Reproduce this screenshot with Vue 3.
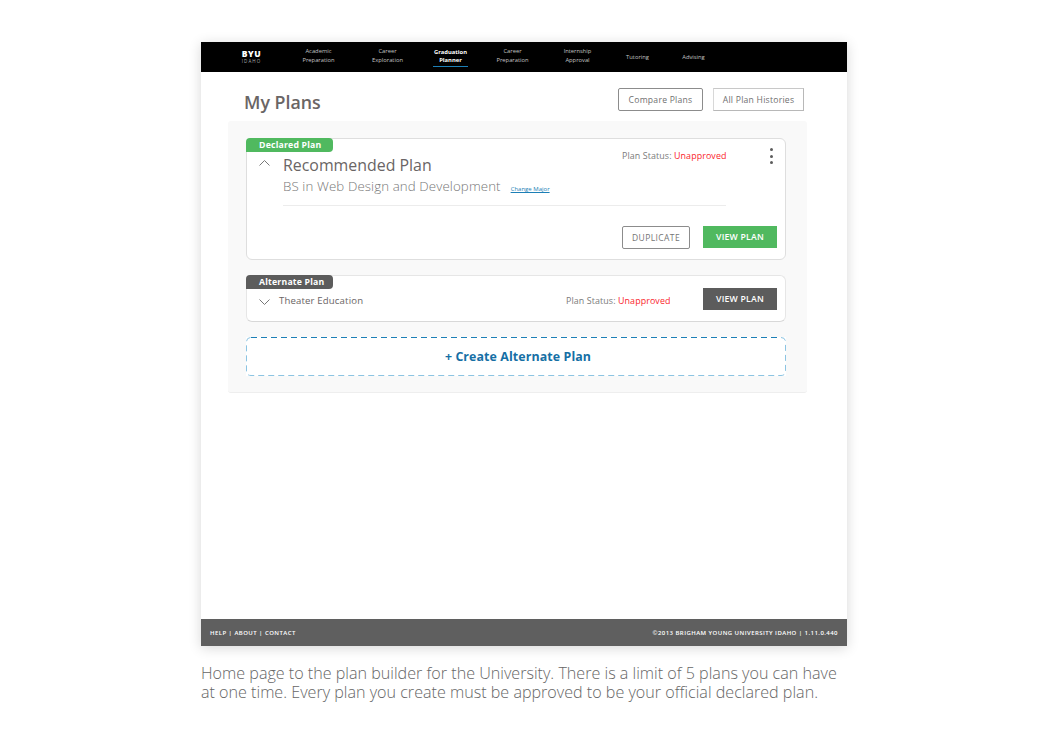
<template>
  <div class="page">
    <div class="frame">
      <nav class="nav">
        <div class="logo"><b>BYU</b><span>IDAHO</span></div>
        <a v-for="item in navItems" :key="item.label + item.second" class="nav-item" :class="{ active: item.active, single: !item.second }">
          <span class="nav-text">{{ item.label }}<br v-if="item.second" />{{ item.second }}</span>
        </a>
      </nav>

      <main class="main">
        <header class="head">
          <h1>My Plans</h1>
          <div class="head-actions">
            <button class="ghost compare">Compare Plans</button>
            <button class="ghost histories">All Plan Histories</button>
          </div>
        </header>

        <section class="panel">
          <article class="card declared">
            <div class="tag green">Declared Plan</div>
            <div class="declared-top">
              <svg class="chev up" width="11" height="6" viewBox="0 0 11 6"><path d="M0.5 5.5 L5.5 0.5 L10.5 5.5" /></svg>
              <div class="declared-info">
                <h2>Recommended Plan</h2>
                <div class="major">
                  <span>BS in Web Design and Development</span>
                  <a>Change Major</a>
                </div>
              </div>
              <div class="status top-status">Plan Status: <em>Unapproved</em></div>
              <div class="dots"><i></i><i></i><i></i></div>
            </div>
            <div class="rule"></div>
            <div class="declared-actions">
              <button class="duplicate">DUPLICATE</button>
              <button class="solid view-green">VIEW PLAN</button>
            </div>
          </article>

          <article class="card alternate">
            <div class="tag dark">Alternate Plan</div>
            <div class="alt-row">
              <svg class="chev" width="11" height="6" viewBox="0 0 11 6"><path d="M0.5 0.5 L5.5 5.5 L10.5 0.5" /></svg>
              <span class="alt-name">Theater Education</span>
              <div class="status alt-status">Plan Status: <em>Unapproved</em></div>
              <button class="solid view-dark">VIEW PLAN</button>
            </div>
          </article>

          <div class="create">
            <svg class="create-border" width="540" height="39" viewBox="0 0 540 39">
              <path class="dash-top" d="M5 0.5 H535" />
              <path class="dash-rest" d="M535 0.5 Q539.5 0.5 539.5 5 V34 Q539.5 38.5 535 38.5 H5 Q0.5 38.5 0.5 34 V5 Q0.5 0.5 5 0.5" />
            </svg>
            + Create Alternate Plan
          </div>
        </section>
      </main>

      <footer class="foot">
        <span>HELP | ABOUT | CONTACT</span>
        <span>©2013 BRIGHAM YOUNG UNIVERSITY IDAHO | 1.11.0.440</span>
      </footer>
    </div>

    <p class="caption">Home page to the plan builder for the University. There is a limit of 5 plans you can have at one time. Every plan you create must be approved to be your official declared plan.</p>
  </div>
</template>

<script setup>
const navItems = [
  { label: 'Academic', second: 'Preparation' },
  { label: 'Career', second: 'Exploration' },
  { label: 'Graduation', second: 'Planner', active: true },
  { label: 'Career', second: 'Preparation' },
  { label: 'Internship', second: 'Approval' },
  { label: 'Tutoring' },
  { label: 'Advising' }
]
</script>

<style>
html, body { margin: 0; background: #fff; }
</style>

<style scoped>
.page {
  width: 1048px;
  height: 755px;
  padding: 42px 0 0 201px;
  box-sizing: border-box;
  overflow: hidden;
  font-family: "Open Sans", sans-serif;
  background: #fff;
}
.frame {
  width: 646px;
  height: 604px;
  display: flex;
  flex-direction: column;
  box-shadow: 0 2px 12px rgba(0, 0, 0, 0.16);
  background: #fff;
}
.nav {
  height: 30px;
  flex: none;
  background: #000;
  display: grid;
  grid-template-columns: 60px 74px 64px 62px 62px 68px 52px 60px;
  padding-left: 20.5px;
  color: #c4c4c4;
}
.logo {
  display: flex;
  flex-direction: column;
  align-items: center;
  justify-content: center;
  color: #fff;
  padding-bottom: 1px;
}
.logo b { font-size: 8.5px; font-weight: 800; letter-spacing: 0.5px; line-height: 8px; }
.logo span { font-size: 4.5px; line-height: 6px; letter-spacing: 1.1px; color: #aaa; }
.nav-item {
  display: flex;
  align-items: center;
  justify-content: center;
  text-align: center;
  font-size: 5.8px;
  line-height: 8.5px;
}
.nav-text { display: block; padding-bottom: 3px; }
.nav-item.single .nav-text { padding-bottom: 0; }
.nav-item.active { color: #fff; font-weight: 700; }
.nav-item.active .nav-text {
  padding: 0 1px 1px;
  border-bottom: 1px solid #1c7fb6;
}
.main { flex: 1; padding: 0 40px 0 27px; min-height: 0; }
.head {
  height: 49px;
  display: flex;
  justify-content: space-between;
  align-items: flex-start;
  padding-left: 16px;
}
h1 {
  margin: 17px 0 0;
  font-size: 17.8px;
  line-height: 26px;
  font-weight: 600;
  color: #6a6565;
}
.head-actions { display: flex; gap: 10px; margin: 16px 3px 0 0; }
.ghost {
  height: 23px;
  padding: 0;
  background: #fff;
  font: 400 8.6px "Open Sans", sans-serif;
  letter-spacing: 0.25px;
  color: #6f6f6f;
  box-sizing: border-box;
}
.compare { width: 85px; border: 1px solid #8c8c8c; border-radius: 2px; }
.histories { width: 91px; border: 1px solid #b8b8b8; border-left-color: #d8d8d8; border-top-color: #c8c8c8; }
.panel {
  width: 579px;
  height: 272px;
  box-sizing: border-box;
  padding: 17px 21px 0 18px;
  background: #f9f9f9;
  border-radius: 3px;
  border-bottom: 1px solid #eee;
  display: flex;
  flex-direction: column;
}
.card {
  position: relative;
  background: #fff;
  border: 1px solid #dedede;
  border-radius: 6px;
  box-sizing: border-box;
}
.tag {
  position: absolute;
  left: -1px;
  top: -1px;
  width: 87px;
  height: 14px;
  border-radius: 4px 4px 4px 0;
  box-sizing: border-box;
  padding-left: 13px;
  color: #fff;
  font-size: 8.7px;
  font-weight: 700;
  line-height: 14px;
  letter-spacing: 0.2px;
}
.tag.green { background: #50b95f; }
.tag.dark { background: #5c5c5c; }
.declared { height: 122px; }
.declared-top { display: flex; align-items: flex-start; height: 66px; }
.chev { flex: none; fill: none; stroke: #777; stroke-width: 1; }
.chev.up { margin: 21px 0 0 12px; }
.declared-info { margin-left: 13px; width: 339px; }
h2 {
  margin: 16px 0 0;
  font-size: 15.9px;
  line-height: 20px;
  font-weight: 500;
  color: #6a6565;
}
.major {
  display: flex;
  align-items: baseline;
  gap: 10px;
  margin-top: 2px;
  font-size: 13.3px;
  line-height: 19px;
  font-weight: 300;
  color: #777;
  white-space: nowrap;
  letter-spacing: 0.1px;
}
.major a {
  font-size: 6px;
  font-weight: 400;
  color: #1c7fb6;
  text-decoration: underline;
  letter-spacing: 0;
}
.status {
  font-size: 8.9px;
  color: #7b7b7b;
  white-space: nowrap;
  letter-spacing: 0.1px;
}
.status em { font-style: normal; color: #fa1e2c; }
.top-status { margin: 10px 0 0 0; width: 105px; line-height: 14px; }
.dots { display: flex; flex-direction: column; gap: 3.5px; margin: 9px 0 0 43px; }
.dots i { display: block; width: 3px; height: 3px; border-radius: 50%; background: #5c5c5c; }
.rule { height: 1px; margin: 0 59px 0 36px; background: #ececec; }
.declared-actions { display: flex; justify-content: flex-end; gap: 13px; padding: 20px 8px 0 0; }
.duplicate {
  width: 68px;
  height: 23px;
  padding: 0;
  background: #fff;
  border: 1px solid #8c8c8c;
  border-radius: 2px;
  font: 400 8.5px "Open Sans", sans-serif;
  letter-spacing: 0.4px;
  color: #757575;
}
.solid {
  width: 74px;
  height: 22px;
  padding: 0;
  border: 0;
  color: #fff;
  font: 600 8.7px "Open Sans", sans-serif;
  letter-spacing: 0.2px;
}
.view-green { background: #50b95f; }
.view-dark { background: #5c5c5c; }
.alternate {
  height: 47px;
  margin-top: 15px;
  border-color: #e6e6e6;
  border-bottom-color: #d8d8d8;
}
.alt-row { display: flex; align-items: flex-start; height: 100%; padding-top: 12px; box-sizing: border-box; }
.alt-row .chev { margin: 11px 0 0 12px; }
.alt-name { margin: 6px 0 0 9px; width: 287px; font-size: 9.6px; line-height: 14px; color: #6a6565; letter-spacing: 0.15px; }
.alt-status { margin-top: 6px; line-height: 14px; width: 137px; }
.create {
  position: relative;
  height: 39px;
  margin-top: 15px;
  padding-left: 4px;
  box-sizing: border-box;
  background: #fff;
  text-align: center;
  color: #166fa5;
  font-size: 12.4px;
  font-weight: 700;
  line-height: 39px;
  letter-spacing: 0.1px;
}
.create-border { position: absolute; left: 0; top: 0; fill: none; }
.dash-top { stroke: #1c7fb6; stroke-width: 1; stroke-dasharray: 6 4; }
.dash-rest { stroke: #8cc4e2; stroke-width: 1; stroke-dasharray: 6 4; }
.foot {
  height: 27px;
  flex: none;
  background: #5f5f5f;
  display: flex;
  justify-content: space-between;
  align-items: center;
  padding: 0 9px;
  color: #fff;
  font-size: 6px;
  font-weight: 600;
  letter-spacing: 0.45px;
}
.caption {
  width: 646px;
  margin: 18px 0 0;
  font-size: 16.12px;
  line-height: 19px;
  font-weight: 300;
  color: #666;
}
</style>
